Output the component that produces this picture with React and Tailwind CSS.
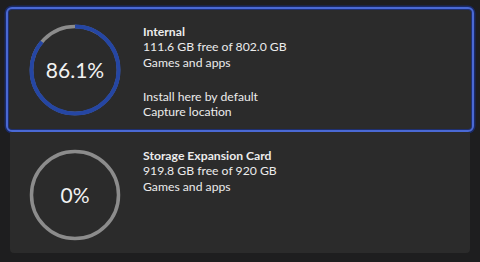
import React from 'react'

const FONT = { fontFamily: 'Lato, "Noto Sans", sans-serif' }

function Ring({ percent, label }) {
  const r = 43.5
  const c = 2 * Math.PI * r
  const used = (percent / 100) * c
  return (
    <div className="relative h-[92px] w-[92px] shrink-0">
      <svg width="92" height="92" viewBox="0 0 92 92" className="absolute inset-0">
        <circle cx="46" cy="46" r={r} fill="none" stroke="#8c8c8c" strokeWidth="3.5" />
        {percent > 0 && (
          <circle
            cx="46"
            cy="46"
            r={r}
            fill="none"
            stroke="#2546a3"
            strokeWidth="4"
            strokeDasharray={`${used} ${c}`}
            transform="rotate(-90 46 46)"
          />
        )}
      </svg>
      <div className="absolute inset-0 flex items-center justify-center text-[21px] text-[#f2f2f2]">
        {label}
      </div>
    </div>
  )
}

function Lines({ title, free, usage, extra }) {
  return (
    <div className="flex flex-col text-[12.2px] leading-[15.3px] text-[#ececec]">
      <span className="font-bold">{title}</span>
      <span>{free}</span>
      <span>{usage}</span>
      {extra && (
        <div className="mt-[19px] flex flex-col">
          {extra.map((t) => (
            <span key={t}>{t}</span>
          ))}
        </div>
      )}
    </div>
  )
}

export default function App() {
  return (
    <div className="flex h-[262px] w-[480px] flex-col bg-[#1e1e1f] pt-[7px]" style={FONT}>
      <div className="mx-[6px] flex h-[125px] shrink-0 rounded-[6px] border-2 border-[#4a69d4] bg-[#2b2b2b] shadow-[0_0_0_1.5px_#1a2a66,inset_0_0_0_1px_#1e2f70]">
        <div className="pl-[21px] pt-[15px]">
          <Ring percent={86.1} label="86.1%" />
        </div>
        <div className="pl-[22px] pt-[15px]">
          <Lines
            title="Internal"
            free="111.6 GB free of 802.0 GB"
            usage="Games and apps"
            extra={['Install here by default', 'Capture location']}
          />
        </div>
      </div>
      <div className="mx-[10px] flex h-[121px] shrink-0 rounded-b-[4px] bg-[#2b2b2b]">
        <div className="pl-[19px] pt-[17px]">
          <Ring percent={0} label="0%" />
        </div>
        <div className="pl-[22px] pt-[16px]">
          <Lines title="Storage Expansion Card" free="919.8 GB free of 920 GB" usage="Games and apps" />
        </div>
      </div>
    </div>
  )
}
